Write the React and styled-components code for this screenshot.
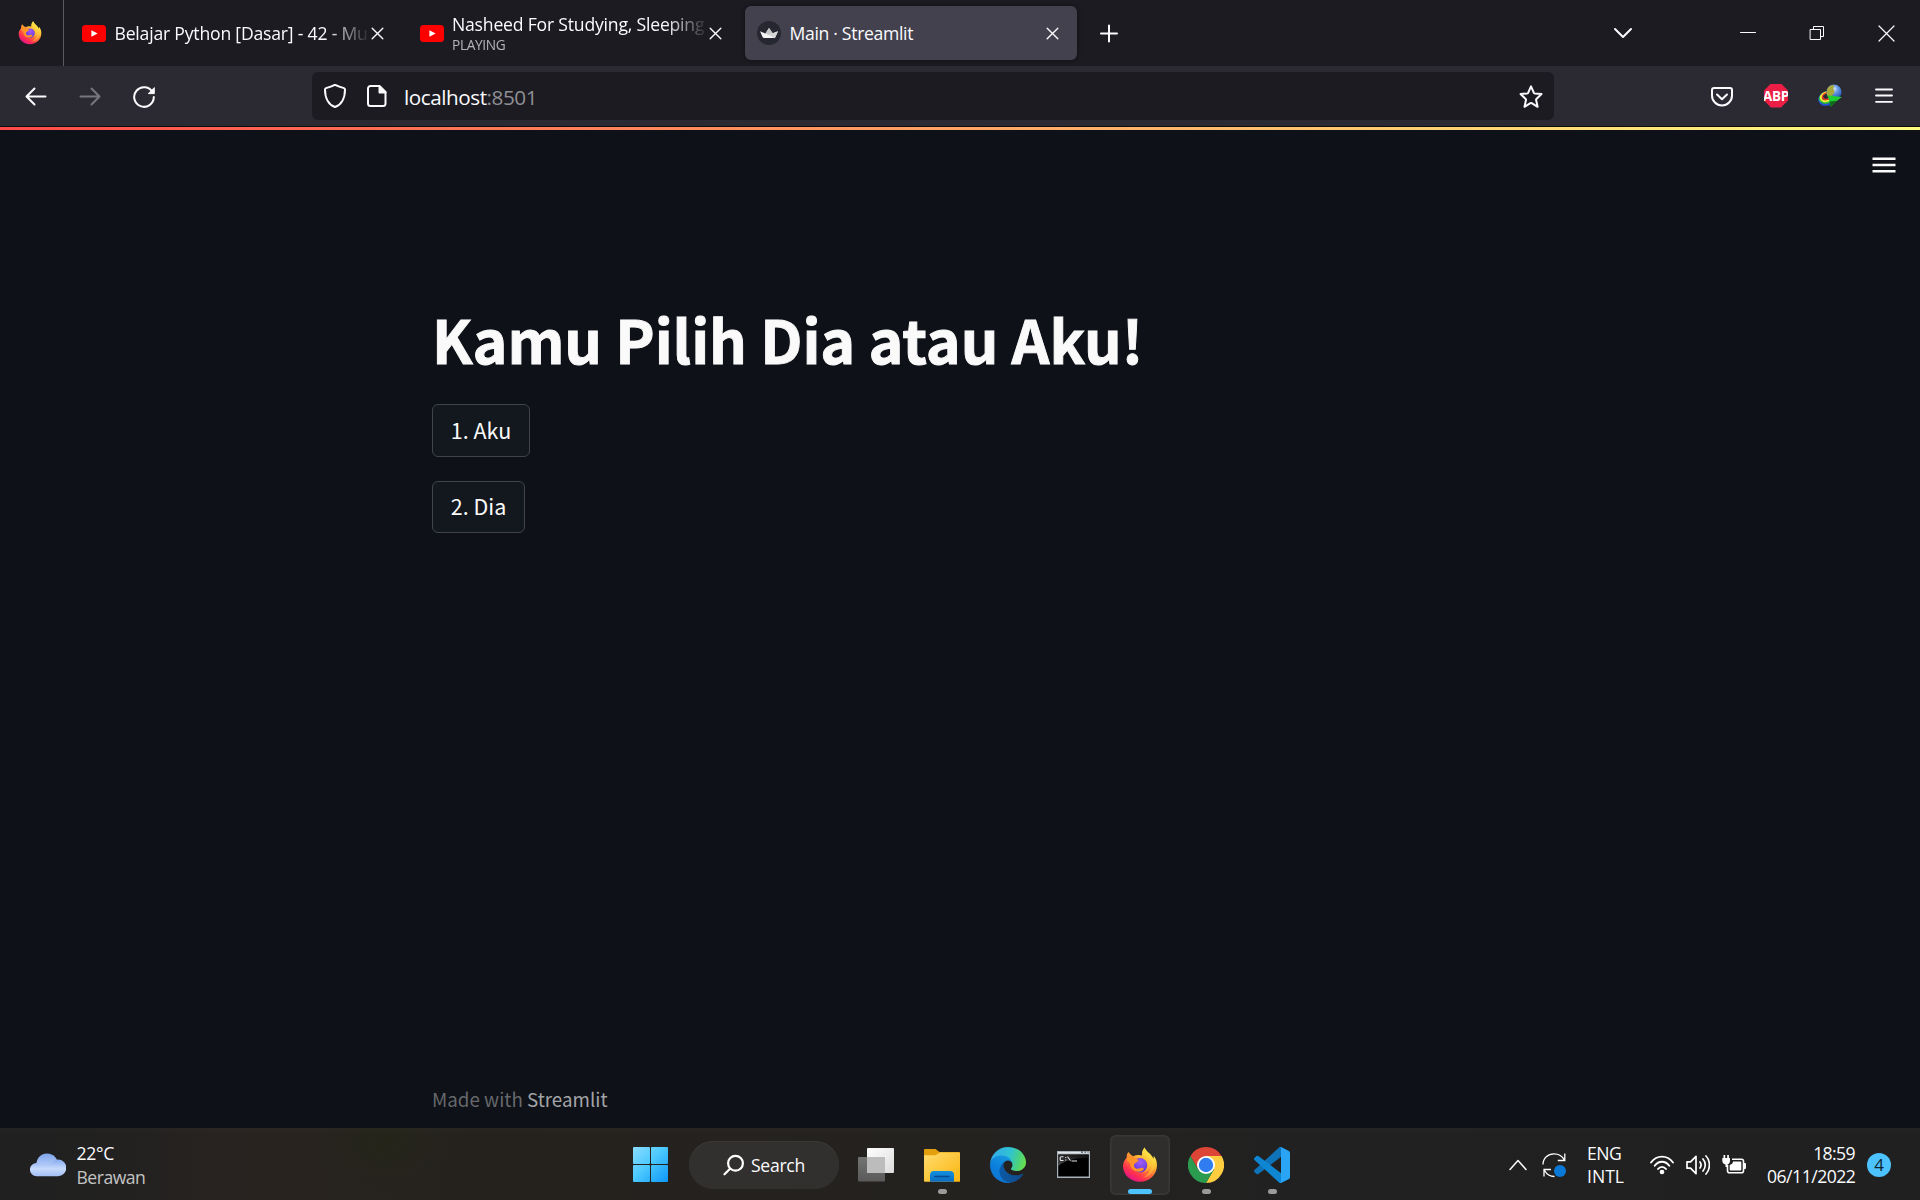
import React from "react";
import styled, { createGlobalStyle } from "styled-components";

const ui = `"Open Sans", "Noto Sans", sans-serif`;
const source = `"Noto Sans CJK SC", "Noto Sans", sans-serif`;

const GlobalStyle = createGlobalStyle`
  *, *::before, *::after { box-sizing: border-box; }
  body { margin: 0; background: #0e1117; overflow: hidden; }
  svg { display: block; flex: none; }
`;

const Screen = styled.div`
  display: flex;
  flex-direction: column;
  width: 1920px;
  height: 1200px;
  color: #fbfbfe;
  font-family: ${ui};
`;

/* ---------- tab strip ---------- */
const TabStrip = styled.header`
  display: flex;
  align-items: center;
  height: 66px;
  background: #1c1b22;
`;
const PinnedTab = styled.div`
  display: flex;
  align-items: center;
  width: 64px;
  height: 66px;
  padding-left: 18px;
  margin-right: 6px;
  border-right: 1px solid #5b5a61;
`;
const Tab = styled.div`
  display: flex;
  align-items: center;
  width: 332px;
  height: 54px;
  margin-right: 5.5px;
  padding: 0 18px 0 12px;
  border-radius: 6px;
  background: ${(p) => (p.$active ? "#42414d" : "transparent")};
  box-shadow: ${(p) => (p.$active ? "0 0 4px rgba(0,0,0,.5)" : "none")};
`;
const TabText = styled.div`
  flex: 1;
  min-width: 0;
  margin: 0 2px 0 8.5px;
  white-space: nowrap;
  ${(p) => p.$fade && `mask-image: linear-gradient(to right, #000 calc(100% - 42px), transparent calc(100% + 2px));`}
`;
const TabTitle = styled.div`
  font-size: 17.6px;
  line-height: 23px;
  letter-spacing: ${(p) => p.$ls}px;
`;
const TabStatus = styled.div`
  font-size: 13.7px;
  line-height: 18px;
  letter-spacing: -0.35px;
  color: #b5b5b9;
`;
const NewTab = styled.div`
  margin-left: 17.5px;
  flex: 1;
`;
const WindowControls = styled.div`
  display: flex;
  align-items: center;
  padding-right: 25px;
  gap: 53px;
`;
const ListTabs = styled.div`
  margin-right: 108px;
`;

/* ---------- navigation bar ---------- */
const NavBar = styled.nav`
  display: flex;
  align-items: center;
  height: 61px;
  padding: 0 24px 1px 24px;
  background: #2b2a33;
  border-bottom: 1px solid #0c0c0d;
`;
const NavButtons = styled.div`
  display: flex;
  gap: 30px;
  width: 288px;
`;
const UrlBar = styled.div`
  display: flex;
  align-items: center;
  width: 1242px;
  height: 48px;
  padding: 0 11px;
  border-radius: 6px;
  background: #1c1b22;
`;
const Url = styled.div`
  flex: 1;
  margin-left: 15px;
  padding-top: 2px;
  font-size: 20.7px;
  line-height: 30px;
  letter-spacing: -0.45px;
`;
const Port = styled.span`
  color: #8f8f94;
`;
const Extensions = styled.div`
  display: flex;
  align-items: center;
  justify-content: flex-end;
  flex: 1;
  gap: 30px;
`;
const Abp = styled.div`
  display: flex;
  align-items: center;
  justify-content: center;
  width: 24px;
  height: 24px;
  background: #ed1e45;
  clip-path: polygon(29% 0, 71% 0, 100% 29%, 100% 71%, 71% 100%, 29% 100%, 0 71%, 0 29%);
  font: 700 13.5px/24px "Liberation Sans Narrow", "Open Sans", sans-serif;
  letter-spacing: -0.2px;
  color: #fff;
`;

/* ---------- page ---------- */
const Rainbow = styled.div`
  height: 3px;
  background: linear-gradient(to right, #ff4b4b, #fffd80);
`;
const Page = styled.main`
  display: flex;
  flex-direction: column;
  height: 998px;
  background: #0e1117;
  font-family: ${source};
  color: #fafafa;
`;
const PageMenu = styled.div`
  display: flex;
  justify-content: flex-end;
  height: 168px;
  padding: 23px 24px 0 0;
`;
const Content = styled.section`
  display: flex;
  flex-direction: column;
  align-items: flex-start;
  flex: 1;
  padding-left: 432px;
`;
const Title = styled.h1`
  margin: 0 0 26px;
  font-size: 59.2px;
  line-height: 80px;
  font-weight: 700;
  letter-spacing: -0.09px;
  -webkit-text-stroke: 0.9px #fafafa;
  white-space: nowrap;
`;
const Choice = styled.button`
  width: ${(p) => p.$w}px;
  height: ${(p) => p.$h}px;
  margin: 0 0 24px;
  padding: 0 0 2px;
  border: 1px solid #41444c;
  border-radius: 6px;
  background: #13171e;
  color: #fafafa;
  font: 400 21.5px/30px ${source};
`;
const Footer = styled.footer`
  padding-left: 432px;
  height: 44px;
  font-size: 18.8px;
  line-height: 30px;
  color: #66686c;
`;
const FooterLink = styled.span`
  color: #a3a4a7;
`;

/* ---------- taskbar ---------- */
const Taskbar = styled.footer`
  display: flex;
  align-items: center;
  height: 72px;
  padding-top: 2px;
  background:
    linear-gradient(rgba(255,255,255,.015), transparent 6px),
    radial-gradient(ellipse 70px 50px at 385px 15px, #242519, transparent),
    linear-gradient(to right, #202020 0, #222120 130px, #282320 220px, #27231f 350px, #25221e 480px, #242220 1050px, #212121 1300px, #202020 100%);
`;
const Weather = styled.div`
  display: flex;
  align-items: center;
  width: 621px;
  padding-left: 30px;
  gap: 10.5px;
`;
const Lines = styled.div`
  font-size: 17.6px;
  line-height: ${(p) => p.$lh}px;
  text-align: ${(p) => p.$align || "left"};
  letter-spacing: ${(p) => p.$ls || 0}px;
  white-space: nowrap;
`;
const Muted = styled.div`
  color: #c4c4c4;
`;
const Line = styled.div`
  letter-spacing: ${(p) => p.$ls || 0}px;
`;
const Apps = styled.div`
  display: flex;
  align-items: center;
  gap: 6px;
`;
const AppButton = styled.div`
  display: flex;
  flex-direction: column;
  align-items: center;
  width: 60px;
  height: 60px;
  padding-top: 12px;
  border-radius: 6px;
  background: ${(p) => (p.$active ? "#2f2e2d" : "transparent")};
  box-shadow: ${(p) => (p.$active ? "inset 0 0 0 1.5px #393837" : "none")};
`;
const Indicator = styled.i`
  width: ${(p) => (p.$active ? 24 : 9)}px;
  height: 5px;
  margin-top: 6px;
  border-radius: 2.5px;
  background: ${(p) => (p.$active ? "#4cc2ff" : "#9a9a9a")};
`;
const SearchPill = styled.div`
  display: flex;
  align-items: center;
  width: 150px;
  height: 48px;
  margin: 0 1px 0 2px;
  padding-left: 34px;
  gap: 7px;
  border-radius: 24px;
  background: #32302f;
  box-shadow: inset 0 1px 0 #3b3938;
  font-size: 17.6px;
  letter-spacing: -0.3px;
`;
const Tray = styled.div`
  display: flex;
  align-items: center;
  flex: 1;
  justify-content: flex-end;
  padding-right: 29px;
`;
const Slot = styled.div`
  width: ${(p) => p.$w}px;
  margin-right: ${(p) => p.$gap}px;
`;
const Badge = styled.div`
  width: 24px;
  height: 24px;
  border-radius: 50%;
  background: #4cc2ff;
  color: #10222c;
  font-size: 17px;
  line-height: 24px;
  text-align: center;
`;

/* ---------- drawings ---------- */
const Stroke = ({ w = 24, h = 24, sw = 2, children, color = "#fbfbfe" }) => (
  <svg width={w} height={h} viewBox={`0 0 ${w} ${h}`} fill="none" stroke={color} strokeWidth={sw} strokeLinecap="round" strokeLinejoin="round">
    {children}
  </svg>
);

const Firefox = ({ size, id }) => (
  <svg width={size} height={size} viewBox="0 0 36 36">
    <defs>
      <linearGradient id={`${id}a`} x1=".8" y1=".1" x2=".25" y2=".95">
        <stop offset="0" stopColor="#fff44f" />
        <stop offset=".3" stopColor="#ffbd2f" />
        <stop offset=".55" stopColor="#ff7139" />
        <stop offset=".8" stopColor="#ff2f50" />
        <stop offset="1" stopColor="#e31587" />
      </linearGradient>
      <radialGradient id={`${id}b`} cx=".55" cy=".3" r=".75">
        <stop offset="0" stopColor="#a25cf5" />
        <stop offset=".6" stopColor="#7543e5" />
        <stop offset="1" stopColor="#5b3cc8" />
      </radialGradient>
      <linearGradient id={`${id}c`} x1=".7" y1="0" x2=".3" y2="1">
        <stop offset="0" stopColor="#fff44f" />
        <stop offset="1" stopColor="#ff9a2a" />
      </linearGradient>
    </defs>
    <path fill={`url(#${id}a)`} d="M22.6.4c-1.8 2.2-3 5-2.5 8.2-2.8-.9-6-.9-8.8.6C9.4 8.5 7.6 6.8 6.500 5 5 6.4 4.5 8.5 4.700 10.700 2.600 12.800 1 16 1 19c.2 9 7.400 15.700 17 15.700 9.600 0 17-7 17-16.700 0-3.800-1.400-7.200-3.400-9.300.2 1.100.1 2.400-.2 3.100C29.600 6.800 24.300 5.200 22.600.4z" />
    <circle cx="18" cy="18.300" r="7.200" fill={`url(#${id}b)`} />
    <path fill="#ff9328" d="M4.700 10.700c1-1 2-1.300 3.200-1.200C9 10 10 10.200 11.300 9.200c.2 2.200 2.400 2.800 5.400 3.600-.2 2.300-3.500 2.900-4.600 4.600-.5 1.300 0 3.200 2 4.100 2.300 1 5.300-1.400 7.300-.5 1.200.8-.9 3.700-4.700 3.700-5.500 0-9.200-4.400-8.500-8.700-2.500-1-4-2.900-3.500-5.300z" />
    <path fill={`url(#${id}c)`} d="M22.600.4c-1.800 2.200-3 5-2.500 8.200 1.900 1.500 4 3.300 4.900 5.800 1.600 4.500-.4 9-4.200 11.300 5.200-.8 9.300-5.400 9-11.300-.4 9.200-4.400 13.700-9 16.700C28 29.500 33 24.400 32.500 16c-.2-2.200-.5-3.100-1.100-4.200C29.600 6.800 24.300 5.200 22.600.4z" opacity=".75" />
  </svg>
);

const YouTube = () => (
  <svg width="24" height="24" viewBox="0 0 24 24">
    <rect y="4" width="24" height="17" rx="3.500" fill="#f00" />
    <path d="M9.400 9.200v6.600l6.200-3.300z" fill="#fff" />
  </svg>
);
const Crown = () => (
  <svg width="24" height="24" viewBox="0 0 24 24">
    <circle cx="12" cy="12" r="12" fill="#262730" />
    <path d="M3 10.200l5.400 2.300L12 7l3.700 5.300 5.300-2-2.700 6c-.3.500-.8.700-1.300.7H7c-.6 0-1-.3-1.300-.8z" fill="#f4f4f4" />
    <path d="M8.400 12.500L12 7l3.700 5.300L12 14z" fill="#c6c6c6" />
    <path d="M21 10.300l-5.300 2L12 14l5 3c.6 0 1-.2 1.300-.7z" fill="#d5d5d5" />
  </svg>
);
const CloseTab = () => (
  <Stroke w={13} h={13} sw={1.400}><path d="M1.200 1.200l10.600 10.600M11.800 1.200L1.200 11.800" /></Stroke>
);
const Idm = () => (
  <svg width="24" height="24" viewBox="0 0 24 24">
    <defs>
      <radialGradient id="globe" cx=".5" cy=".3" r=".7">
        <stop offset="0" stopColor="#dcecff" /><stop offset=".35" stopColor="#6d9fe8" /><stop offset="1" stopColor="#1546ae" />
      </radialGradient>
    </defs>
    <g fill="none" transform="rotate(-20 8 14)">
      <ellipse cx="8.500" cy="14.800" rx="7.700" ry="6" stroke="#2350d8" strokeWidth="2" />
      <ellipse cx="8.700" cy="13.800" rx="7" ry="5" stroke="#2fc33c" strokeWidth="2" />
      <ellipse cx="9" cy="13" rx="5.900" ry="4.200" stroke="#f8ea3c" strokeWidth="2" />
      <ellipse cx="9.400" cy="12.500" rx="4.400" ry="3.200" stroke="#ee3a24" strokeWidth="1.500" />
    </g>
    <circle cx="16" cy="8" r="7.600" fill="url(#globe)" />
    <path d="M9.500 4.500C11 2 14 .8 16 1.500c1.200 1-1.200 2-.5 3.500 1.500 1.500 1 4-.5 5.500s-1.500 4-3.500 3.500C8.500 12.500 8 8 9.500 4.500z" fill="#a9a83a" />
    <path d="M9.500 11.200l14.300 1.800-4.800 3.800-6.500 6-1-5z" fill="#1fd034" />
    <path d="M11.500 17.500l7.500-.7-6.500 6z" fill="#0b6c1a" />
  </svg>
);

const Cloud = () => (
  <svg width="36" height="24" viewBox="0 0 36 24">
    <defs>
      <linearGradient id="cl1" x1="0" y1="0" x2="0" y2="1"><stop offset="0" stopColor="#7ea4ea" /><stop offset=".5" stopColor="#a9c4f6" /><stop offset="1" stopColor="#c9dcfb" /></linearGradient>
      <linearGradient id="cl2" x1="0" y1="0" x2="0" y2="1"><stop offset="0" stopColor="#86aaf0" /><stop offset=".55" stopColor="#c7dafb" /><stop offset="1" stopColor="#a2bff5" /></linearGradient>
    </defs>
    <path d="M6 14C6 6 10 .5 17 .5S28 6 28 12v8H8z" fill="url(#cl1)" />
    <path d="M6.500 23.200A6.500 6.500 0 0 1 6.500 10c4 0 6 2 8.500 3.500L22 10c1.500-2.500 4-3.500 6-3.500a8.300 8.300 0 0 1 0 16.700z" fill="url(#cl2)" />
  </svg>
);
const StartLogo = () => (
  <svg width="36" height="36" viewBox="0 0 36 36">
    <defs>
      <linearGradient id="win" x1="0" y1="0" x2="36" y2="36" gradientUnits="userSpaceOnUse"><stop offset="0" stopColor="#8bdcff" /><stop offset=".45" stopColor="#4cc9fe" /><stop offset="1" stopColor="#0a94f8" /></linearGradient>
    </defs>
    <g fill="url(#win)"><rect width="17" height="17" rx="1" /><rect x="18" width="17" height="17" rx="1" /><rect y="18" width="17" height="17" rx="1" /><rect x="18" y="18" width="17" height="17" rx="1" /></g>
  </svg>
);
const TaskView = () => (
  <svg width="36" height="36" viewBox="0 0 36 36">
    <defs>
      <linearGradient id="tv" x1="0" y1="0" x2="1" y2="1"><stop offset="0" stopColor="#fff" /><stop offset="1" stopColor="#dcdcdc" /></linearGradient>
      <linearGradient id="tw" x1="0" y1="0" x2="0" y2="1"><stop offset="0" stopColor="#737373" /><stop offset="1" stopColor="#5a5a5a" /></linearGradient>
    </defs>
    <rect y="10" width="27" height="24.500" rx="1" fill="url(#tw)" />
    <rect x="9" y="1" width="27" height="25" rx="1" fill="url(#tv)" />
    <path d="M9 10h18v16H10a1 1 0 0 1-1-1z" fill="#bcbcbc" />
  </svg>
);
const Explorer = () => (
  <svg width="36" height="36" viewBox="0 0 36 36">
    <defs>
      <linearGradient id="fo" x1="0" y1="0" x2="1" y2="1"><stop offset="0" stopColor="#ffdc6e" /><stop offset="1" stopColor="#fbb50f" /></linearGradient>
      <linearGradient id="fp" x1="0" y1="0" x2="0" y2="1"><stop offset="0" stopColor="#1490df" /><stop offset="1" stopColor="#0c6cc0" /></linearGradient>
    </defs>
    <path d="M0 3a1 1 0 0 1 1-1h10.500l4 3H35a1 1 0 0 1 1 1v8H0z" fill="#e2a00f" />
    <path d="M0 8.200h11.500L16 5.500h19a1 1 0 0 1 1 1V34a.8.8 0 0 1-1 .8H1a1 1 0 0 1-1-1z" fill="url(#fo)" />
    <path d="M6 34.800v-7A4 4 0 0 1 10 24h16a4 4 0 0 1 4 4v6.800z" fill="url(#fp)" />
    <path d="M11 29.500h14" stroke="#08498f" strokeWidth="1.600" strokeLinecap="round" />
  </svg>
);
const Edge = () => (
  <svg width="36" height="36" viewBox="0 0 256 256">
    <defs>
      <linearGradient id="e1" x1=".1" y1=".5" x2="1" y2=".5"><stop offset="0" stopColor="#0c59a4" /><stop offset="1" stopColor="#114a8b" /></linearGradient>
      <linearGradient id="e2" x1=".8" y1="0" x2=".3" y2="1"><stop offset="0" stopColor="#1b9de2" /><stop offset=".6" stopColor="#0a7edb" /><stop offset="1" stopColor="#1173cf" /></linearGradient>
      <linearGradient id="e3" x1="0" y1=".4" x2="1" y2=".6"><stop offset="0" stopColor="#35a9e8" /><stop offset=".5" stopColor="#2fc2d4" /><stop offset=".8" stopColor="#4bd37e" /><stop offset="1" stopColor="#6ae04a" /></linearGradient>
    </defs>
    <g transform="translate(-4.630 -4.920)">
      <path fill="url(#e1)" d="M235.680 195.460a93.730 93.730 0 0 1-10.540 4.710 101.870 101.870 0 0 1-35.900 6.460c-47.320 0-88.540-32.550-88.540-74.320A31.480 31.480 0 0 1 117.130 105c-42.800 1.800-53.800 46.400-53.800 72.530 0 73.880 68.090 81.370 82.760 81.370 7.910 0 19.840-2.300 27-4.560l1.310-.44a128.340 128.340 0 0 0 66.600-52.800 4 4 0 0 0-5.320-5.640z" />
      <path fill="url(#e2)" d="M110.340 246.340A79.200 79.200 0 0 1 87.600 225a80.720 80.720 0 0 1 29.530-120c3.120-1.470 8.450-4.130 15.540-4a32.350 32.350 0 0 1 25.690 13 31.880 31.880 0 0 1 6.360 18.660c0-.21 24.460-79.600-80-79.600-43.900 0-80 41.660-80 78.210a130.150 130.150 0 0 0 12.110 56 128 128 0 0 0 156.380 67.110 75.550 75.550 0 0 1-62.780-8z" />
      <path fill="url(#e3)" d="M156.940 153.780c-.81 1.050-3.300 2.500-3.300 5.660 0 2.610 1.700 5.120 4.720 7.230 14.380 10 41.490 8.680 41.560 8.680a59.560 59.560 0 0 0 30.270-8.350 61.380 61.380 0 0 0 30.430-52.880c.26-22.410-8-37.310-11.340-43.910-21.190-41.450-66.930-65.290-116.670-65.290a128 128 0 0 0-128 126.200c.48-36.540 36.800-66.050 80-66.050 3.500 0 23.460.34 42 10.070 16.340 8.580 24.900 18.940 30.850 29.210 6.180 10.670 7.280 24.150 7.280 29.520s-2.740 13.330-7.800 19.910z" />
    </g>
  </svg>
);
const Terminal = () => (
  <svg width="36" height="36" viewBox="0 0 36 36">
    <defs><linearGradient id="tm" x1="1" y1="0" x2=".2" y2="1"><stop offset="0" stopColor="#111" /><stop offset="1" stopColor="#666" /></linearGradient></defs>
    <rect x="1" y="4" width="33" height="27" fill="#a9b2b9" />
    <rect x="2" y="5" width="31" height="1.500" fill="#dfe5e9" />
    <path d="M25 5.200h2M28.500 5.200h1.500M31.500 5.200h1" stroke="#44505a" strokeWidth="1.200" />
    <rect x="2.200" y="7.500" width="30.600" height="22" fill="#000" />
    <path d="M2.200 7.500h30.600v3C18 11 8 14 2.200 19z" fill="url(#tm)" opacity=".65" />
    <g stroke="#e6e6e6" strokeWidth="1.100" fill="none"><path d="M7.500 9.800H5.200c-.6 0-1 .4-1 1v1.700c0 .6.400 1 1 1h2.300M9.800 10v1M9.800 12.500v1M11.500 9.500l3 4.200M15.500 14h5.500" /></g>
  </svg>
);
const Chrome = () => (
  <svg width="36" height="36" viewBox="0 0 48 48">
    <path fill="#ffcd40" d="M24 48A24 24 0 0 0 44.800 12H24l10.400 18z" />
    <path fill="#dd4537" d="M24 12h20.800A24 24 0 0 0 3.200 12l10.400 18z" />
    <path fill="#2b9c4f" d="M3.200 12l10.400 18L24 36l10.400-6L24 48A24 24 0 0 1 3.200 12z" />
    <circle cx="24" cy="24" r="12" fill="#fff" />
    <circle cx="24" cy="24" r="9.600" fill="#2f7df0" />
  </svg>
);
const VsCode = () => (
  <svg width="36" height="36" viewBox="0 0 100 100">
    <path fill="#0f73b9" d="M96.460 10.800L75.860.88a6.230 6.230 0 0 0-7.100 1.200L1.300 63.600a4.170 4.170 0 0 0 0 6.160l5.510 5.010a4.170 4.170 0 0 0 5.320.24L93.360 13.400C96.100 11.300 100 13.250 100 16.670v-.24a6.250 6.250 0 0 0-3.540-5.630z" />
    <path fill="#0e86d2" d="M96.460 89.200l-20.600 9.920a6.230 6.230 0 0 1-7.100-1.200L1.300 36.400a4.170 4.170 0 0 1 0-6.160l5.510-5.010a4.170 4.170 0 0 1 5.320-.24l81.230 61.600c2.730 2.100 6.640.14 6.640-3.300v.24a6.250 6.250 0 0 1-3.540 5.630z" />
    <path fill="#2aa4f4" d="M75.860 99.130a6.230 6.230 0 0 1-7.110-1.210c2.310 2.300 6.250.67 6.250-2.600V4.670c0-3.260-3.940-4.890-6.250-2.590a6.230 6.230 0 0 1 7.110-1.210l20.600 9.910A6.250 6.250 0 0 1 100 16.410v67.170a6.250 6.250 0 0 1-3.540 5.630z" />
  </svg>
);

const apps = [
  { name: "taskview", Icon: TaskView },
  { name: "explorer", Icon: Explorer, open: true },
  { name: "edge", Icon: Edge },
  { name: "terminal", Icon: Terminal },
  { name: "firefox", Icon: () => <Firefox size={36} id="task" />, open: true, active: true },
  { name: "chrome", Icon: Chrome, open: true },
  { name: "vscode", Icon: VsCode, open: true },
];

export default function App() {
  return (
    <Screen>
      <GlobalStyle />
      <TabStrip>
        <PinnedTab><Firefox size={24} id="pin" /></PinnedTab>
        <Tab>
          <YouTube />
          <TabText $fade><TabTitle $ls={-0.2}>Belajar Python [Dasar] - 42 - Mu</TabTitle></TabText>
          <CloseTab />
        </Tab>
        <Tab>
          <YouTube />
          <TabText $fade>
            <TabTitle $ls={-0.2}>Nasheed For Studying, Sleeping</TabTitle>
            <TabStatus>PLAYING</TabStatus>
          </TabText>
          <CloseTab />
        </Tab>
        <Tab $active>
          <Crown />
          <TabText><TabTitle $ls={-0.32}>Main · Streamlit</TabTitle></TabText>
          <CloseTab />
        </Tab>
        <NewTab><Stroke w={18} h={20}><path d="M1 10.500h16M9 2.500v16" /></Stroke></NewTab>
        <ListTabs><Stroke w={18} h={12}><path d="M1 2l8 8 8-8" /></Stroke></ListTabs>
        <WindowControls>
          <Stroke w={16} h={16} sw={1}><path d="M.5 7.500h15" /></Stroke>
          <Stroke w={16} h={16} sw={1}><path d="M1.500 4.500h10v10h-10zM4.500 4.500v-3h10v10h-3" strokeLinejoin="miter" /></Stroke>
          <Stroke w={17} h={17} sw={1.200}><path d="M1 1l15 15M16 1L1 16" /></Stroke>
        </WindowControls>
      </TabStrip>

      <NavBar>
        <NavButtons>
          <Stroke><path d="M3 12.500h18.500M10.500 4.500l-8 8 8 8" /></Stroke>
          <Stroke color="#77767c"><path d="M2.500 12.500H21M13.500 4.500l8 8-8 8" /></Stroke>
          <Stroke>
            <path d="M20.700 8.500A9.800 9.800 0 1 0 21.800 13" />
            <path d="M22.300 4v5.600h-5.600z" fill="#fbfbfe" strokeWidth="1" />
          </Stroke>
        </NavButtons>
        <UrlBar>
          <Stroke><path d="M12 1.300c3.500 1.600 6.300 2.500 9 3.300.8.300 1 .8 1 1.400C22 15 18 21.500 12 23.500 6 21.500 2 15 2 6c0-.6.300-1.100 1-1.400 2.700-.8 5.500-1.700 9-3.300z" transform="translate(0 -.5)" /></Stroke>
          <Slot $w={18} $gap={0} />
          <Stroke>
            <path d="M5.500 2h9l6 6v11.500a2.500 2.500 0 0 1-2.500 2.500H5.500A2.500 2.500 0 0 1 3 19.500v-15A2.500 2.500 0 0 1 5.500 2z" />
            <path d="M14.500 2.500v6h6z" fill="#fbfbfe" />
          </Stroke>
          <Url>localhost<Port>:8501</Port></Url>
          <Stroke><path d="M12 1.800l2.800 6.300c.2.400.5.600.9.700l6.800.7-5.100 4.800c-.3.300-.4.700-.3 1.100l1.500 6.800-5.900-3.600c-.4-.2-.9-.2-1.300 0l-5.900 3.600L7 15.400c.1-.4 0-.8-.3-1.100L1.500 9.500l6.800-.7c.4-.1.700-.3.900-.7z" transform="translate(0 .6)" /></Stroke>
        </UrlBar>
        <Extensions>
          <Stroke>
            <path d="M4 4h16a2 2 0 0 1 2 2v5.500a10 10 0 0 1-20 0V6a2 2 0 0 1 2-2z" />
            <path d="M7 10.500l5 4.800 5-4.800" />
          </Stroke>
          <Abp>ABP</Abp>
          <Idm />
          <Stroke sw={1.800}><path d="M4 6h16M4 12h16M4 18.300h16" transform="translate(0 -.5)" /></Stroke>
        </Extensions>
      </NavBar>

      <Rainbow />
      <Page>
        <PageMenu>
          <svg width="24" height="24" viewBox="0 0 24 24"><path d="M.5 5.800h23M.5 12h23M.5 18.200h23" stroke="#fafafa" strokeWidth="2.400" /></svg>
        </PageMenu>
        <Content>
          <Title>Kamu Pilih Dia atau Aku!</Title>
          <Choice $w={98} $h={53}>1. Aku</Choice>
          <Choice $w={93} $h={52}>2. Dia</Choice>
        </Content>
        <Footer>Made with <FooterLink>Streamlit</FooterLink></Footer>
      </Page>

      <Taskbar>
        <Weather>
          <Cloud />
          <Lines $lh={24}><Line $ls={-0.3}>22°C</Line><Muted><Line $ls={-0.5}>Berawan</Line></Muted></Lines>
        </Weather>
        <Apps>
          <AppButton><StartLogo /></AppButton>
          <SearchPill>
            <Stroke w={21} h={22} sw={2.200} color="#fff"><path d="M12.500 1.800a7.400 7.400 0 1 1 0 14.800 7.400 7.400 0 0 1 0-14.800zM7.300 14.500L1.500 20.300" /></Stroke>
            Search
          </SearchPill>
          {apps.map(({ name, Icon, open, active }) => (
            <AppButton key={name} $active={active}>
              <Icon />
              {open && <Indicator $active={active} />}
            </AppButton>
          ))}
        </Apps>
        <Tray>
          <Slot $w={18} $gap={15}><Stroke w={18} h={12} sw={1.500}><path d="M1 10.500l8-9 8 9" /></Stroke></Slot>
          <Slot $w={24} $gap={21}>
            <svg width="24" height="26" viewBox="0 0 24 26" fill="none" stroke="#fff" strokeWidth="1.300">
              <path d="M1 12.500C1 6 6 1.800 12 1.800c4.500 0 8.500 2.500 10.300 6.200M22.800 1.500v7h-7M2 24.500v-7h7M2.500 18.500c2 3.500 5.500 6 10 6" />
              <circle cx="18" cy="19" r="6" fill="#0a78d6" stroke="none" />
            </svg>
          </Slot>
          <Slot $w={36} $gap={27}>
            <Lines $lh={23}><Line $ls={-0.5}>ENG</Line><Line>INTL</Line></Lines>
          </Slot>
          <Slot $w={24} $gap={12}>
            <Stroke w={24} h={20} color="#fff" sw={1.900}>
              <path d="M1 7.500C7-.3 17-.3 23 7.500M4.700 10.800c4-5.400 10.600-5.400 14.600 0M8 14c2.200-2.900 5.800-2.900 8 0" />
              <circle cx="12" cy="17" r="1.400" fill="#fff" />
            </Stroke>
          </Slot>
          <Slot $w={24} $gap={12}>
            <Stroke w={24} h={22} color="#fff" sw={1.700}>
              <path d="M1 7.800h3.500L10 2.300v17.400l-5.500-5.500H1zM14 8c1.300 1.800 1.300 4.200 0 6M17 5c3 3.500 3 8.500 0 12M20 2c4.500 5 4.500 13 0 18" />
            </Stroke>
          </Slot>
          <Slot $w={24} $gap={21}>
            <svg width="24" height="20" viewBox="0 0 24 20">
              <path d="M10 4.200h9.500a2 2 0 0 1 2 2v9.600a2 2 0 0 1-2 2h-12a2 2 0 0 1-2-2V10" fill="none" stroke="#fff" strokeWidth="1.600" />
              <path d="M22 8h1a1 1 0 0 1 1 1v4a1 1 0 0 1-1 1h-1zM11 6.500h7.500a.8.800 0 0 1 .8.800v7.500a.8.800 0 0 1-.8.800H8.500a.8.800 0 0 1-.8-.8V10C9.500 9.500 11 8.500 11 6.500zM1.500 0h1.700v3h2V0h1.700v3H8v2.500C8 8 7 9 5.500 9.500V12H3.500V9.500C1.500 9 .3 8 .3 5.500V3h1.200z" fill="#fff" />
            </svg>
          </Slot>
          <Slot $w={88} $gap={12}>
            <Lines $lh={23} $align="right"><Line $ls={-0.6}>18:59</Line><Line $ls={-0.5}>06/11/2022</Line></Lines>
          </Slot>
          <Badge>4</Badge>
        </Tray>
      </Taskbar>
    </Screen>
  );
}
